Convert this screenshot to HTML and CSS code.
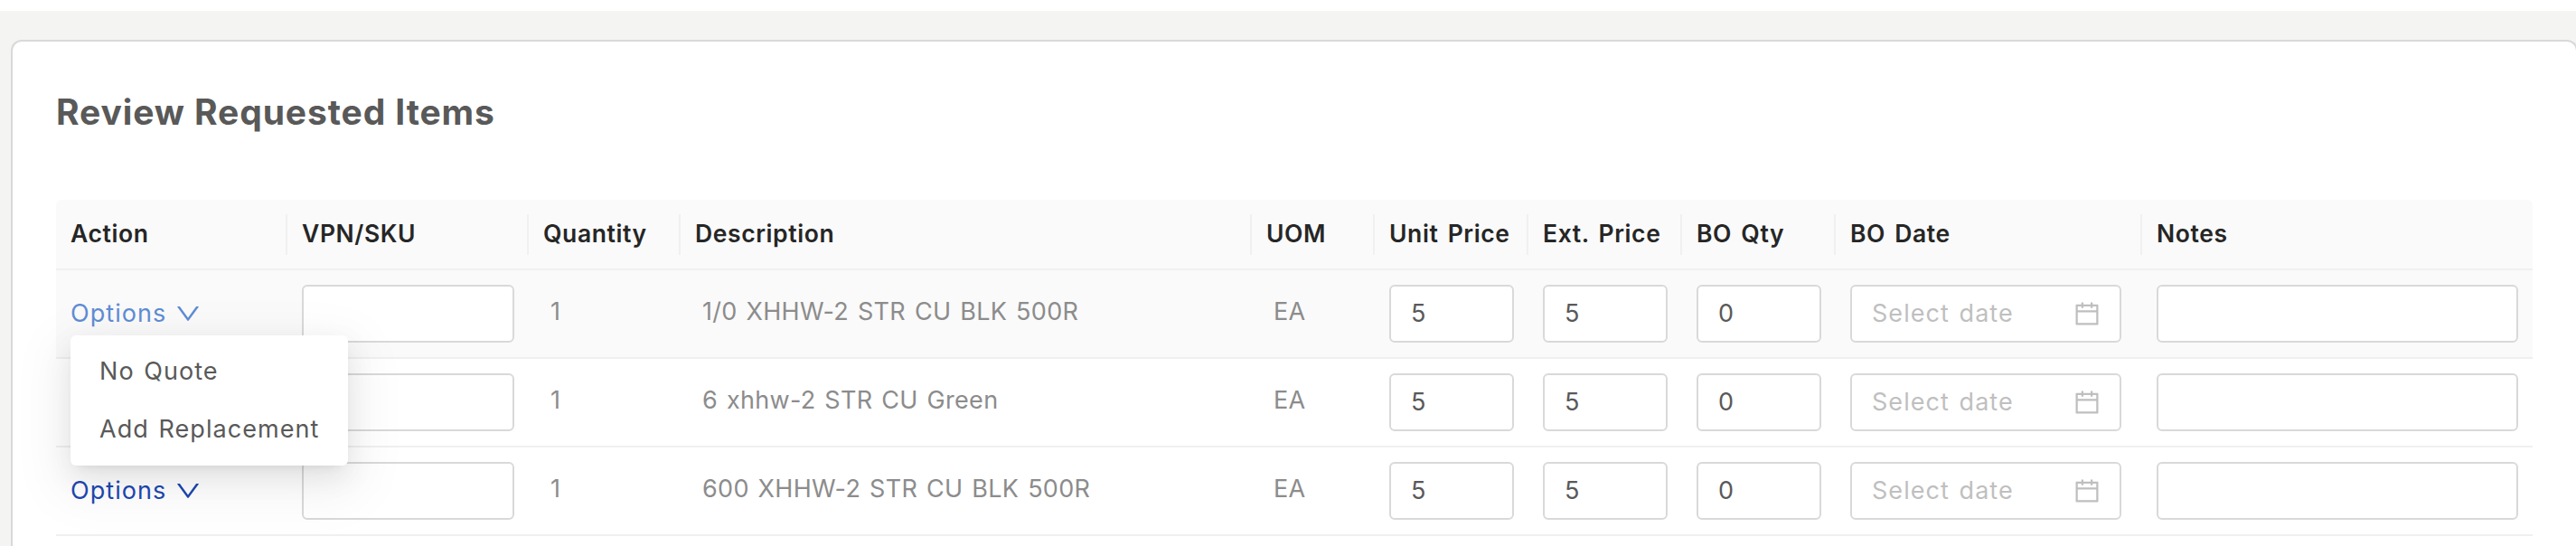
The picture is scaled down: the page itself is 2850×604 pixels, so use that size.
FILE: index.html
```html
<!DOCTYPE html>
<html lang="en">
<head>
  <meta charset="UTF-8">
  <title>Review Requested Items</title>
  <link rel="stylesheet" href="styles.css">
</head>
<body>

<svg class="sprite" width="0" height="0">
  <symbol id="down" viewBox="64 64 896 896">
    <path d="M884 256h-75c-5.100 0-9.900 2.500-12.900 6.600L512 654.200 227.900 262.600c-3-4.100-7.800-6.600-12.900-6.600h-75c-6.500 0-10.300 7.400-6.500 12.700l352.600 486.100c12.800 17.600 39 17.600 51.700 0l352.600-486.100c3.900-5.300.1-12.700-6.400-12.700z"/>
  </symbol>
  <symbol id="calendar" viewBox="64 64 896 896">
    <path d="M880 184H712v-64c0-4.400-3.600-8-8-8h-56c-4.400 0-8 3.600-8 8v64H384v-64c0-4.400-3.600-8-8-8h-56c-4.400 0-8 3.600-8 8v64H144c-17.700 0-32 14.300-32 32v664c0 17.700 14.300 32 32 32h736c17.700 0 32-14.300 32-32V216c0-17.700-14.300-32-32-32zm-40 656H184V460h656v380zM184 392V256h128v48c0 4.400 3.600 8 8 8h56c4.400 0 8-3.600 8-8v-48h256v48c0 4.400 3.600 8 8 8h56c4.400 0 8-3.600 8-8v-48h128v136H184z"/>
  </symbol>
</svg>

<div class="page">
  <div class="card">
    <h2>Review Requested Items</h2>

    <table class="items">
      <colgroup>
        <col class="col-action">
        <col class="col-sku">
        <col class="col-qty">
        <col class="col-desc">
        <col class="col-uom">
        <col class="col-num">
        <col class="col-num">
        <col class="col-num">
        <col class="col-date">
        <col class="col-notes">
      </colgroup>
      <thead>
        <tr>
          <th><div>Action</div></th>
          <th><div>VPN/SKU</div></th>
          <th><div>Quantity</div></th>
          <th><div>Description</div></th>
          <th><div>UOM</div></th>
          <th><div>Unit Price</div></th>
          <th><div>Ext. Price</div></th>
          <th><div>BO Qty</div></th>
          <th><div>BO Date</div></th>
          <th><div>Notes</div></th>
        </tr>
      </thead>
      <tbody>
        <tr class="hover">
          <td>
            <div class="dropdown">
              <a class="options open">Options <svg class="icon"><use href="#down"/></svg></a>
              <!-- Options menu -->
              <ul class="menu">
                <li>No Quote</li>
                <li>Add Replacement</li>
              </ul>
            </div>
          </td>
          <td><div class="field"></div></td>
          <td><div class="text">1</div></td>
          <td><div class="text">1/0 XHHW-2 STR CU BLK 500R</div></td>
          <td><div class="text">EA</div></td>
          <td><div class="field">5</div></td>
          <td><div class="field">5</div></td>
          <td><div class="field">0</div></td>
          <td><div class="field date"><span>Select date</span><svg class="icon"><use href="#calendar"/></svg></div></td>
          <td><div class="field"></div></td>
        </tr>
        <tr>
          <td><a class="options">Options <svg class="icon"><use href="#down"/></svg></a></td>
          <td><div class="field"></div></td>
          <td><div class="text">1</div></td>
          <td><div class="text">6 xhhw-2 STR CU Green</div></td>
          <td><div class="text">EA</div></td>
          <td><div class="field">5</div></td>
          <td><div class="field">5</div></td>
          <td><div class="field">0</div></td>
          <td><div class="field date"><span>Select date</span><svg class="icon"><use href="#calendar"/></svg></div></td>
          <td><div class="field"></div></td>
        </tr>
        <tr>
          <td><a class="options">Options <svg class="icon"><use href="#down"/></svg></a></td>
          <td><div class="field"></div></td>
          <td><div class="text">1</div></td>
          <td><div class="text">600 XHHW-2 STR CU BLK 500R</div></td>
          <td><div class="text">EA</div></td>
          <td><div class="field">5</div></td>
          <td><div class="field">5</div></td>
          <td><div class="field">0</div></td>
          <td><div class="field date"><span>Select date</span><svg class="icon"><use href="#calendar"/></svg></div></td>
          <td><div class="field"></div></td>
        </tr>
      </tbody>
    </table>
  </div>
</div>

</body>
</html>
```
FILE: styles.css
```css
* {
  box-sizing: border-box;
}

body {
  margin: 0;
  background: #fff;
  color: #595959;
  font-family: Inter, 'Liberation Sans', sans-serif;
  font-size: 27px;
  line-height: 32px;
  letter-spacing: 1.05px;
  word-spacing: 2px;
}

.sprite {
  display: block;
}

.page {
  height: 592px;
  margin-top: 12px;
  padding: 32px 0 0 12px;
  background: #f4f4f2;
  overflow: hidden;
}

.card {
  width: 2840px;
  height: 560px;
  padding: 54px 48px 0;
  background: #fff;
  border: 2px solid #d9d9d9;
  border-bottom: none;
  border-radius: 12px 12px 0 0;
}

h2 {
  margin: 0 0 73px;
  font-size: 39px;
  line-height: 48px;
  font-weight: 700;
  letter-spacing: 0.9px;
  word-spacing: 0;
}

.icon {
  width: 28px;
  height: 28px;
  fill: currentColor;
}

/* Items table */
.items {
  width: 2740px;
  table-layout: fixed;
  border-collapse: separate;
  border-spacing: 0;
}

.col-action { width: 256px; }
.col-sku { width: 267px; }
.col-qty { width: 168px; }
.col-desc { width: 632px; }
.col-uom { width: 136px; }
.col-num { width: 170px; }
.col-date { width: 339px; }
.col-notes { width: 432px; }

th {
  height: 78px;
  padding: 0;
  background: #fafafa;
  border-bottom: 2px solid #f0f0f0;
  color: #262626;
  font-size: 26.5px;
  font-weight: 570;
  letter-spacing: 0.6px;
  word-spacing: 3px;
  text-align: left;
  white-space: nowrap;
}

th div {
  height: 45px;
  padding-left: 16px;
  line-height: 43px;
  border-right: 2px solid #f0f0f0;
}

th:first-child {
  border-top-left-radius: 6px;
}

th:last-child {
  border-top-right-radius: 6px;
}

th:last-child div {
  border-right: none;
}

td {
  height: 98px;
  padding: 16px;
  border-bottom: 2px solid #f0f0f0;
}

.hover td {
  background: #fafafa;
}

.text {
  padding: 0 8px 5px;
  color: #8c8c8c;
  letter-spacing: 0.3px;
  white-space: nowrap;
}

.field {
  display: flex;
  align-items: center;
  height: 64px;
  padding: 0 22px 1px;
  background: #fff;
  border: 2px solid #d9d9d9;
  border-radius: 6px;
}

.date {
  width: 300px;
  justify-content: space-between;
  color: #bfbfbf;
}

/* Action dropdown */
.dropdown {
  position: relative;
}

.options {
  display: flex;
  align-items: center;
  gap: 10px;
  color: #1d48b3;
  cursor: pointer;
}

.options.open {
  color: #5f8dd3;
}

.menu {
  position: absolute;
  top: 40px;
  left: 0;
  z-index: 1;
  width: 307px;
  margin: 0;
  padding: 8px 0;
  list-style: none;
  background: #fff;
  border-radius: 6px;
  box-shadow: 0 6px 12px -8px rgba(0,0,0,0.12), 0 12px 32px rgba(0,0,0,0.08), 0 18px 56px 16px rgba(0,0,0,0.05);
}

.menu li {
  padding: 0 32px;
  line-height: 64px;
  height: 64px;
  white-space: nowrap;
}
```
